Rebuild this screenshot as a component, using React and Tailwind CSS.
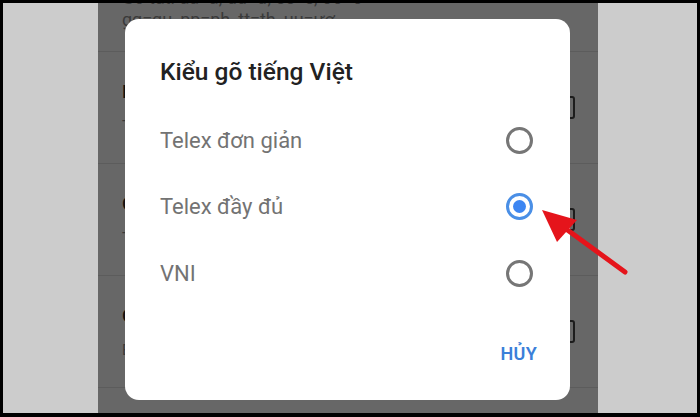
import React from 'react';

const rows = [
    { title: 'Kiểu gõ', sub: 'Telex đầy đủ' },
    { title: 'Chính tả tự động', sub: 'Tự động sửa lỗi chính tả' },
    { title: 'Cho phép gõ tắt', sub: 'Bật gõ tắt tiếng Việt' },
];

const options = [
    { label: 'Telex đơn giản', checked: false },
    { label: 'Telex đầy đủ', checked: true },
    { label: 'VNI', checked: false },
];

function Radio({ checked }) {
    if (checked) {
        return (
            <span className="w-[27px] h-[27px] rounded-full border-[3px] border-[#4a8fe6] flex items-center justify-center">
                <span className="w-[13px] h-[13px] rounded-full bg-[#3d86f2]" />
            </span>
        );
    }
    return <span className="w-[27px] h-[27px] rounded-full border-[3px] border-[#767676]" />;
}

export default function App() {
    return (
        <div className="w-[700px] h-[417px] bg-black pt-[3px] pb-[4px] px-[3px] font-['Roboto','Liberation_Sans',sans-serif] relative overflow-hidden">
            <div className="flex h-full">
                <div className="w-[95px] bg-[#cccccc]" />

                {/* phone screen */}
                <div className="w-[500px] bg-[#676767] relative overflow-hidden">
                    <div className="pl-[24px] text-[#3a3a3a] text-[18px] leading-[22px] -mt-[16px]">
                        <p>Gõ tắt: aa=â, dd=đ, ee=ê, oo=ô</p>
                        <p>gg=gu, pp=ph, tt=th, uu=ươ</p>
                    </div>
                    <div className="mt-[20px] border-t border-[#5c5c5c]">
                        {rows.map((r) => (
                            <div key={r.title} className="h-[112px] border-b border-[#5c5c5c] flex items-center justify-between pl-[24px] pr-[23px]">
                                <div className="flex flex-col gap-[14px]">
                                    <span className="text-[19px] leading-[22px] font-medium text-[#111111]">{r.title}</span>
                                    <span className="text-[15px] leading-[18px] text-[#3a3a3a]">{r.sub}</span>
                                </div>
                                <span className="w-[22px] h-[23px] border-2 border-[#1c1c1c] rounded-[3px]" />
                            </div>
                        ))}
                    </div>

                    {/* dialog */}
                    <div className="absolute left-[27px] top-[16px] w-[445px] h-[381px] bg-white rounded-[14px] flex flex-col">
                        <h2 className="pl-[35px] pt-[38px] text-[24.5px] leading-[30px] font-medium text-[#222222]">Kiểu gõ tiếng Việt</h2>
                        <div className="mt-[20px] flex flex-col">
                            {options.map((o) => (
                                <div key={o.label} className="h-[66.5px] flex items-center justify-between pl-[35px] pr-[37px]">
                                    <span className="text-[22px] text-[#737373]">{o.label}</span>
                                    <Radio checked={o.checked} />
                                </div>
                            ))}
                        </div>
                        <div className="flex justify-end pr-[33px] mt-[37px]">
                            <span className="text-[18px] leading-[20px] font-semibold text-[#3b7fd9] tracking-[0.3px]">HỦY</span>
                        </div>
                    </div>
                </div>

                <div className="flex-1 bg-[#cccccc]" />
            </div>

            {/* red arrow annotation */}
            <svg className="absolute left-0 top-0" width="700" height="417" viewBox="0 0 700 417">
                <line x1="625" y1="272" x2="562" y2="226" stroke="#e5141b" strokeWidth="5" strokeLinecap="round" />
                <polygon points="542,210 557,242 577,220" fill="#e5141b" />
            </svg>
        </div>
    );
}
